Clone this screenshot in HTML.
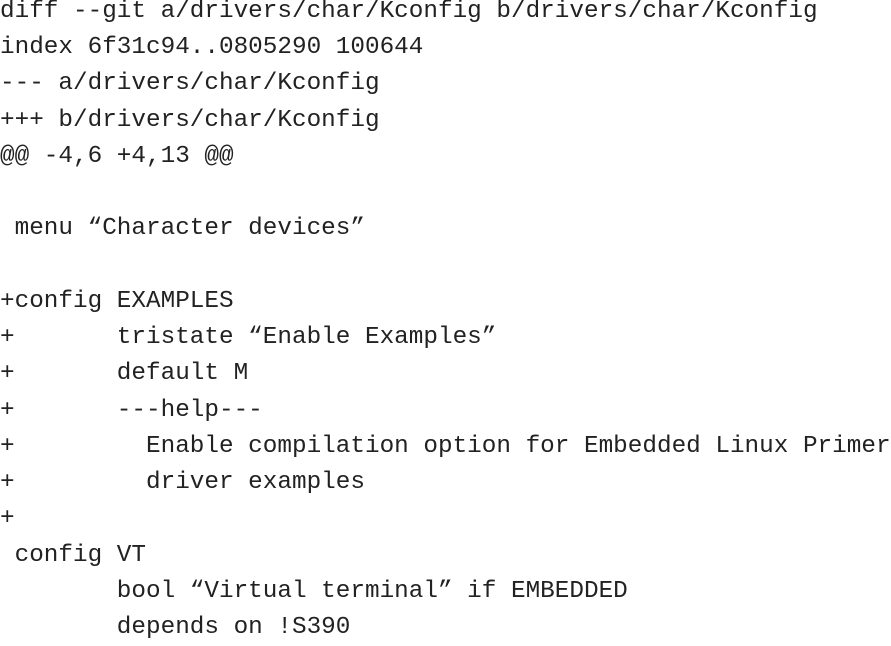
<!DOCTYPE html>
<html><head><meta charset="utf-8"><style>
html,body{margin:0;padding:0;background:#fff;width:891px;height:636px;overflow:hidden}
pre{margin:0;position:absolute;left:0;top:-6px;font-family:"Liberation Mono",monospace;font-size:24.33px;line-height:36.24px;color:#222;white-space:pre}
</style></head><body>
<pre>diff --git a/drivers/char/Kconfig b/drivers/char/Kconfig
index 6f31c94..0805290 100644
--- a/drivers/char/Kconfig
+++ b/drivers/char/Kconfig
@@ -4,6 +4,13 @@

 menu “Character devices”

+config EXAMPLES
+       tristate “Enable Examples”
+       default M
+       ---help---
+         Enable compilation option for Embedded Linux Primer
+         driver examples
+
 config VT
        bool “Virtual terminal” if EMBEDDED
        depends on !S390</pre>
</body></html>
